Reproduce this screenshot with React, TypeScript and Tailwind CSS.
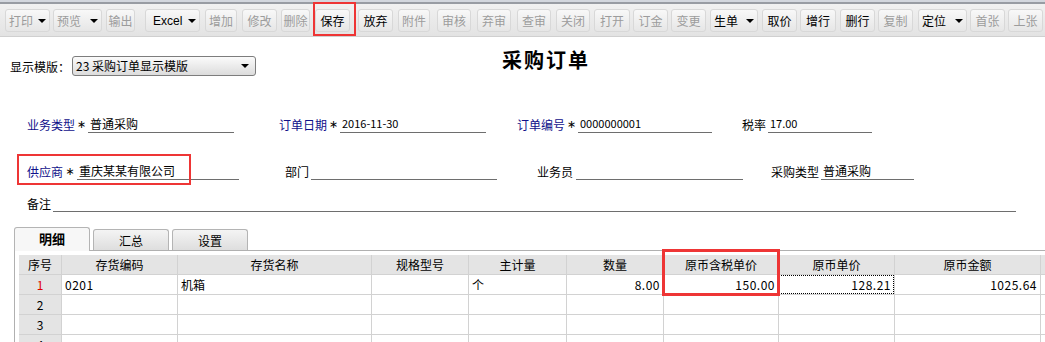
import React from "react";

type Tool = { label: string; w: string; ml: string; arrow?: boolean; off?: boolean; latin?: boolean; mark?: boolean };

// toolbar buttons, left to right
const tools: Tool[] = [
  { label: "打印", w: "w-[45px]", ml: "ml-[5px]", arrow: true, off: true },
  { label: "预览", w: "w-[49px]", ml: "ml-[3px]", arrow: true, off: true },
  { label: "输出", w: "w-[29px]", ml: "ml-[4px]", off: true },
  { label: "Excel", w: "w-[55px]", ml: "ml-[10px]", arrow: true, latin: true },
  { label: "增加", w: "w-[32px]", ml: "ml-[5px]", off: true },
  { label: "修改", w: "w-[35px]", ml: "ml-[5px]", off: true },
  { label: "删除", w: "w-[29px]", ml: "ml-[4px]", off: true },
  { label: "保存", w: "w-[35px]", ml: "ml-[5px]", mark: true },
  { label: "放弃", w: "w-[35px]", ml: "ml-[8px]" },
  { label: "附件", w: "w-[32px]", ml: "ml-[5px]", off: true },
  { label: "审核", w: "w-[34px]", ml: "ml-[7px]", off: true },
  { label: "弃审", w: "w-[34px]", ml: "ml-[6px]", off: true },
  { label: "查审", w: "w-[34px]", ml: "ml-[6px]", off: true },
  { label: "关闭", w: "w-[34px]", ml: "ml-[5px]", off: true },
  { label: "打开", w: "w-[36px]", ml: "ml-[4px]", off: true },
  { label: "订金", w: "w-[35px]", ml: "ml-[3px]", off: true },
  { label: "变更", w: "w-[35px]", ml: "ml-[3px]", off: true },
  { label: "生单", w: "w-[48px]", ml: "ml-[4px]", arrow: true },
  { label: "取价", w: "w-[35px]", ml: "ml-[4px]" },
  { label: "增行", w: "w-[36px]", ml: "ml-[3px]" },
  { label: "删行", w: "w-[35px]", ml: "ml-[4px]" },
  { label: "复制", w: "w-[35px]", ml: "ml-[3px]", off: true },
  { label: "定位", w: "w-[49px]", ml: "ml-[5px]", arrow: true },
  { label: "首张", w: "w-[35px]", ml: "ml-[3px]", off: true },
  { label: "上张", w: "w-[35px]", ml: "ml-[3px]", off: true },
];

const columns = [
  { title: "序号", w: "w-[43px]" },
  { title: "存货编码", w: "w-[116px]" },
  { title: "存货名称", w: "w-[194px]" },
  { title: "规格型号", w: "w-[97px]" },
  { title: "主计量", w: "w-[98px]" },
  { title: "数量", w: "w-[97px]" },
  { title: "原币含税单价", w: "w-[115px]" },
  { title: "原币单价", w: "w-[116px]" },
  { title: "原币金额", w: "w-[146px]" },
  { title: "", w: "w-[40px]" },
];

const Arrow = () => (
  <span className="w-0 h-0 border-l-[4px] border-r-[4px] border-t-[4px] border-l-transparent border-r-transparent border-t-black" />
);

const Field: React.FC<{ w: string; value?: string; mono?: boolean }> = ({ w, value, mono }) => (
  <span className={`${w} h-[17px] border-b border-[#6e6e6e] pl-[2px] leading-[15px] text-black ${mono ? "text-[11px]" : ""}`}>
    {value}
  </span>
);

// required-field marker
const Star = ({ w }: { w: string }) => (
  <span className={`${w} text-center text-[11px] leading-[12px] pb-[2px] text-black font-['DejaVu_Sans',sans-serif]`}>∗</span>
);

const App: React.FC = () => {
  return (
    <div className="w-[1045px] h-[342px] overflow-hidden bg-white text-[12px] text-black font-['Noto_Sans_CJK_SC','Liberation_Sans',sans-serif]">
      {/* toolbar */}
      <div className="h-[2px] bg-[#d3d7de]" />
      <div className="h-[2px] bg-[#989ca3]" />
      <div className="h-[33px] flex items-start pt-[5px] bg-gradient-to-b from-[#f1f1f1] to-[#e3e3e3] border-b border-[#d0d0d0]">
        {tools.map((t) => (
          <div
            key={t.label}
            className={`${t.w} ${t.ml} relative h-[23px] flex items-center shrink-0 rounded-[3px] border border-[#d8d8d8] bg-gradient-to-b from-[#f8f8f8] to-[#e6e6e6]`}
          >
            <span
              className={`leading-[14px] ${t.arrow ? "pl-[3px]" : "w-full text-center"} ${t.off ? "text-[#9c9c9c]" : "text-black"} ${t.latin ? "pl-[7px] font-['Liberation_Sans',sans-serif]" : ""}`}
            >
              {t.label}
            </span>
            {t.arrow && (
              <span className="ml-auto mr-[3px] flex">
                <Arrow />
              </span>
            )}
            {t.mark && <span className="absolute -left-[3px] -top-[8px] w-[43px] h-[34px] border-2 border-[#ee3535]" />}
          </div>
        ))}
      </div>

      {/* template select + title */}
      <div className="flex items-start h-[39px] pt-[19px]">
        <span className="ml-[10px] w-[62px] leading-[21px]">显示模版：</span>
        <div className="w-[184px] h-[20px] flex items-center rounded-[3px] border border-[#7d7d7d] bg-gradient-to-b from-[#fbfbfb] to-[#dcdcdc]">
          <span className="pl-[3px] leading-[14px]">23 采购订单显示模版</span>
          <span className="ml-auto mr-[6px] flex">
            <Arrow />
          </span>
        </div>
        <span className="ml-[246px] -mt-[8px] text-[20px] font-bold leading-[24px] tracking-[2px]">采购订单</span>
      </div>

      {/* header fields */}
      <div className="flex items-end h-[17px] mt-[40px] pl-[27px]">
        <span className="w-[48px] leading-[14px] pb-[1px] text-[#10108a]">业务类型</span>
        <Star w="w-[13px]" />
        <Field w="w-[146px]" value="普通采购" />
        <span className="ml-[45px] w-[48px] leading-[14px] pb-[1px] text-[#10108a]">订单日期</span>
        <Star w="w-[13px]" />
        <Field w="w-[146px]" value="2016-11-30" mono />
        <span className="ml-[31px] w-[48px] leading-[14px] pb-[1px] text-[#10108a]">订单编号</span>
        <Star w="w-[13px]" />
        <Field w="w-[134px]" value="0000000001" mono />
        <span className="ml-[30px] w-[26px] leading-[14px] pb-[1px]">税率</span>
        <Field w="w-[104px]" value="17.00" mono />
      </div>

      <div className="relative flex items-end h-[17px] mt-[30px] pl-[27px]">
        <span className="w-[36px] leading-[14px] pb-[1px] text-[#10108a]">供应商</span>
        <Star w="w-[14px]" />
        <Field w="w-[162px]" value="重庆某某有限公司" />
        <span className="ml-[46px] w-[26px] leading-[14px] pb-[1px]">部门</span>
        <Field w="w-[186px]" />
        <span className="ml-[40px] w-[39px] leading-[14px] pb-[1px]">业务员</span>
        <Field w="w-[167px]" />
        <span className="ml-[28px] w-[50px] leading-[14px] pb-[1px]">采购类型</span>
        <Field w="w-[93px]" value="普通采购" />
        <span className="absolute left-[17px] -top-[9px] w-[174px] h-[31px] border-2 border-[#ee3535]" />
      </div>

      <div className="flex items-end h-[17px] mt-[15px] pl-[27px]">
        <span className="w-[26px] leading-[14px] pb-[1px]">备注</span>
        <Field w="w-[963px]" />
      </div>

      {/* tabs */}
      <div className="flex items-end h-[23px] mt-[15px] pl-[14px]">
        <div className="relative z-10 w-[76px] h-[24px] -mb-px flex items-center justify-center rounded-t-[3px] border border-b-0 border-[#b4b4b4] bg-[#f7f7f7] font-bold text-[13px] leading-[14px] pb-[2px]">
          明细
        </div>
        <div className="ml-[3px] w-[76px] h-[21px] flex items-center justify-center rounded-t-[3px] border border-b-0 border-[#b4b4b4] bg-gradient-to-b from-[#f4f4f4] to-[#dedede] leading-[14px] pt-[2px]">
          汇总
        </div>
        <div className="ml-[3px] w-[76px] h-[21px] flex items-center justify-center rounded-t-[3px] border border-b-0 border-[#b4b4b4] bg-gradient-to-b from-[#f4f4f4] to-[#dedede] leading-[14px] pt-[2px]">
          设置
        </div>
      </div>

      {/* detail grid */}
      <div className="ml-[14px] border-l border-t border-[#b0b0b0] pl-[4px] pt-[4px] h-[100px]">
        <div className="relative">
          <div className="flex h-[20px]">
            {columns.map((c, i) => (
              <div
                key={i}
                className={`${c.w} shrink-0 h-[20px] bg-[#e4e4e4] border-r border-b border-[#d2d2d2] flex items-center justify-center leading-[14px]`}
              >
                {c.title}
              </div>
            ))}
          </div>
          {[1, 2, 3, 4].map((n) => (
            <div key={n} className="flex h-[20px]">
              {columns.map((c, i) => {
                let text = "";
                let align = "justify-start pl-[3px]";
                if (i === 0) {
                  text = String(n);
                  align = "justify-center";
                }
                if (n === 1) {
                  if (i === 1) text = "0201";
                  if (i === 2) text = "机箱";
                  if (i === 4) text = "个";
                  if (i === 5) text = "8.00";
                  if (i === 6) text = "150.00";
                  if (i === 7) text = "128.21";
                  if (i === 8) text = "1025.64";
                  if (i >= 5) align = "justify-end pr-[3px]";
                }
                return (
                  <div
                    key={i}
                    className={`${c.w} relative shrink-0 h-[20px] border-r border-b border-[#d2d2d2] flex items-center ${align} leading-[14px] ${i === 0 ? "bg-[#e4e4e4]" : "bg-white"} ${i === 0 && n === 1 ? "text-[#e00000]" : "text-black"} ${i >= 5 || i === 1 ? "tracking-[0.5px]" : ""}`}
                  >
                    {text}
                    {n === 1 && i === 7 && <span className="absolute inset-0 border border-dotted border-black" />}
                  </div>
                );
              })}
            </div>
          ))}
          <span className="absolute left-[643px] -top-[6px] w-[118px] h-[47px] border-[3px] border-[#ee3535]" />
        </div>
      </div>
    </div>
  );
};

export default App;
